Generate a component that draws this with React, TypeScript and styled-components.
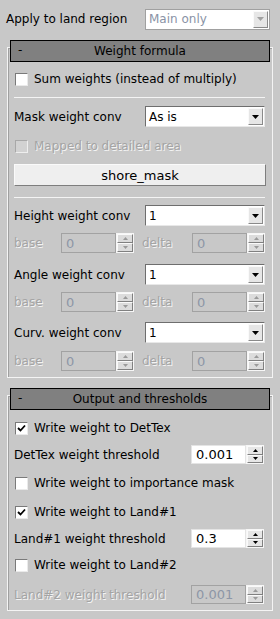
import styled, { createGlobalStyle } from "styled-components";

const Global = createGlobalStyle`
    html, body {
        margin: 0;
        padding: 0;
        background: #c8c8c8;
    }
    body {
        font-family: "DejaVu Sans", Verdana, sans-serif;
        font-size: 12px;
        color: #000;
    }
`

const Page = styled.div`
    width: 280px;
    height: 619px;
    overflow: hidden;
    background: #c8c8c8;
    display: flex;
    flex-direction: column;
    padding-top: 8px;
    box-sizing: border-box;
`

const TopRow = styled.div`
    display: flex;
    align-items: center;
    height: 22px;
    padding-left: 6px;
`

const Group = styled.div<{ $mt: number }>`
    margin: ${p => p.$mt}px 7px 0 7px;
    border: 1px solid #f4f4f4;
    box-shadow: inset 1px 1px 0 #a0a0a0;
    padding: 0 2px 6px 2px;
    display: flex;
    flex-direction: column;
`

const Header = styled.div`
    margin-top: -8px;
    height: 20px;
    background: #808080;
    border: 1px solid #000;
    display: flex;
    align-items: center;
    position: relative;
    justify-content: center;
    color: #000;
`

const HeaderDash = styled.span`
    position: absolute;
    left: 7px;
    top: 2px;
`

const Row = styled.div<{ $mt: number; $h?: number }>`
    display: flex;
    align-items: center;
    margin-top: ${p => p.$mt}px;
    height: ${p => p.$h ?? 21}px;
    padding: 0 5px 0 4px;
`

const Label = styled.span<{ $w?: number; $disabled?: boolean }>`
    width: ${p => p.$w ?? 131}px;
    flex-shrink: 0;
    white-space: nowrap;
    color: ${p => (p.$disabled ? "#a4a4a4" : "#000")};
    text-shadow: ${p => (p.$disabled ? "1px 1px 0 #f4f4f4" : "none")};
`

const Combo = styled.div<{ $disabled?: boolean; $w?: number }>`
    width: ${p => p.$w ?? 120}px;
    height: 21px;
    box-sizing: border-box;
    background: #fff;
    border: 1px solid;
    border-color: ${p => (p.$disabled ? "#a0a0a0" : "#6e6e6e #e8e8e8 #e8e8e8 #6e6e6e")};
    display: flex;
    align-items: stretch;
`

const ComboText = styled.span<{ $disabled?: boolean }>`
    flex: 1;
    padding-left: 3px;
    display: flex;
    align-items: center;
    color: ${p => (p.$disabled ? "#8a93a6" : "#000")};
`

const ComboButton = styled.div<{ $disabled?: boolean }>`
    width: 15px;
    margin: 1px;
    box-sizing: border-box;
    background: #e6e6e6;
    border: 1px solid;
    border-color: #fafafa #8a8a8a #8a8a8a #fafafa;
    display: flex;
    align-items: center;
    justify-content: center;
    color: ${p => (p.$disabled ? "#a0a0a0" : "#000")};
`

const Check = styled.div<{ $disabled?: boolean }>`
    width: 13px;
    height: 13px;
    box-sizing: border-box;
    flex-shrink: 0;
    margin-left: 1px;
    margin-right: 6px;
    background: ${p => (p.$disabled ? "#d2d2d2" : "#fff")};
    border: 1px solid;
    border-color: ${p => (p.$disabled ? "#a8a8a8 #eeeeee #eeeeee #a8a8a8" : "#7a7a7a #eaeaea #eaeaea #7a7a7a")};
    display: flex;
    align-items: center;
    justify-content: center;
`

const Separator = styled.div<{ $mt: number }>`
    margin: ${p => p.$mt}px 5px 0 4px;
    height: 1px;
    background: #f4f4f4;
`

const Button = styled.div`
    margin: 9px 4px 0 4px;
    height: 22px;
    box-sizing: border-box;
    background: #efefef;
    border: 1px solid;
    border-color: #fafafa #7e7e7e #7e7e7e #fafafa;
    display: flex;
    align-items: center;
    justify-content: center;
    font-size: 13px;
`

const SpinBox = styled.div<{ $disabled?: boolean; $w?: number }>`
    width: ${p => p.$w ?? 55}px;
    height: 100%;
    box-sizing: border-box;
    background: ${p => (p.$disabled ? "#c8c8c8" : "#fff")};
    border: 1px solid ${p => (p.$disabled ? "#a2a2a2" : "#e4e4e4")};
    display: flex;
    align-items: center;
    padding-left: 4px;
    font-size: 13px;
    color: ${p => (p.$disabled ? "#8d96a6" : "#000")};
    flex-shrink: 0;
`

const SpinButtons = styled.div`
    width: 18px;
    height: 100%;
    display: flex;
    flex-direction: column;
    flex-shrink: 0;
    border: 1px solid #f6f6f6;
    box-sizing: border-box;
`

const SpinHalf = styled.div<{ $disabled?: boolean }>`
    flex: 1;
    background: ${p => (p.$disabled ? "#dcdcdc" : "#e6e6e6")};
    border: 1px solid;
    border-color: #fafafa #808080 #808080 #fafafa;
    display: flex;
    align-items: center;
    justify-content: center;
    color: ${p => (p.$disabled ? "#9a9a9a" : "#000")};
`

const Spacer = styled.div`
    flex: 1;
`

function Arrow({ up, size = 7 }: { up?: boolean; size?: number }) {
    const h = Math.ceil(size / 2)
    return (
        <svg width={size} height={h} viewBox={`0 0 ${size} ${h}`}>
            <path
                d={up ? `M0 ${h}L${size / 2} 0L${size} ${h}Z` : `M0 0L${size} 0L${size / 2} ${h}Z`}
                fill="currentColor"
            />
        </svg>
    )
}

function Tick() {
    return (
        <svg width="9" height="9" viewBox="0 0 9 9">
            <path d="M1 4L3.5 6.5L8 1.5" stroke="#000" strokeWidth="1.8" fill="none" />
        </svg>
    )
}

function Dropdown({ value, disabled, w }: { value: string; disabled?: boolean; w?: number }) {
    return (
        <Combo $disabled={disabled} $w={w}>
            <ComboText $disabled={disabled}>{value}</ComboText>
            <ComboButton $disabled={disabled}>
                <Arrow />
            </ComboButton>
        </Combo>
    )
}

function Spinner({ value, disabled, w }: { value: string; disabled?: boolean; w?: number }) {
    return (
        <>
            <SpinBox $disabled={disabled} $w={w}>{value}</SpinBox>
            <SpinButtons>
                <SpinHalf $disabled={disabled}><Arrow up size={5} /></SpinHalf>
                <SpinHalf $disabled={disabled}><Arrow size={5} /></SpinHalf>
            </SpinButtons>
        </>
    )
}

function CheckRow({ mt, label, checked, disabled }: { mt: number; label: string; checked?: boolean; disabled?: boolean }) {
    return (
        <Row $mt={mt} $h={18}>
            <Check $disabled={disabled}>{checked && <Tick />}</Check>
            <Label $disabled={disabled} $w={220}>{label}</Label>
        </Row>
    )
}

function ConvRow({ mt, label }: { mt: number; label: string }) {
    return (
        <Row $mt={mt}>
            <Label>{label}</Label>
            <Dropdown value="1" />
        </Row>
    )
}

function BaseRow({ mt }: { mt: number }) {
    return (
        <Row $mt={mt} $h={20}>
            <Label $disabled $w={47}>base</Label>
            <Spinner value="0" disabled />
            <Label $disabled $w={58} style={{ paddingLeft: 8, boxSizing: "border-box" }}>delta</Label>
            <Spinner value="0" disabled />
        </Row>
    )
}

function ThresholdRow({ mt, label, value, disabled }: { mt: number; label: string; value: string; disabled?: boolean }) {
    return (
        <Row $mt={mt} $h={19} style={{ paddingRight: 8 }}>
            <Label $disabled={disabled} $w={177}>{label}</Label>
            <Spacer />
            <Spinner value={value} disabled={disabled} />
        </Row>
    )
}

export default function App() {
    return (
        <>
            <Global />
            <Page>
                <TopRow>
                    <Label $w={139}>Apply to land region</Label>
                    <Dropdown value="Main only" disabled w={125} />
                </TopRow>

                <Group $mt={17}>
                    <Header>
                        <HeaderDash>-</HeaderDash>
                        Weight formula
                    </Header>
                    <CheckRow mt={8} label="Sum weights (instead of multiply)" />
                    <Separator $mt={9} />
                    <Row $mt={8}>
                        <Label>Mask weight conv</Label>
                        <Dropdown value="As is" />
                    </Row>
                    <CheckRow mt={10} label="Mapped to detailed area" disabled />
                    <Button>shore_mask</Button>
                    <Separator $mt={11} />
                    <ConvRow mt={7} label="Height weight conv" />
                    <BaseRow mt={7} />
                    <ConvRow mt={11} label="Angle weight conv" />
                    <BaseRow mt={7} />
                    <ConvRow mt={10} label="Curv. weight conv" />
                    <BaseRow mt={8} />
                </Group>

                <Group $mt={17}>
                    <Header>
                        <HeaderDash>-</HeaderDash>
                        Output and thresholds
                    </Header>
                    <CheckRow mt={9} label="Write weight to DetTex" checked />
                    <ThresholdRow mt={8} label="DetTex weight threshold" value="0.001" />
                    <CheckRow mt={10} label="Write weight to importance mask" />
                    <CheckRow mt={11} label="Write weight to Land#1" checked />
                    <ThresholdRow mt={8} label="Land#1 weight threshold" value="0.3" />
                    <CheckRow mt={8} label="Write weight to Land#2" />
                    <ThresholdRow mt={11} label="Land#2 weight threshold" value="0.001" disabled />
                </Group>
            </Page>
        </>
    )
}
